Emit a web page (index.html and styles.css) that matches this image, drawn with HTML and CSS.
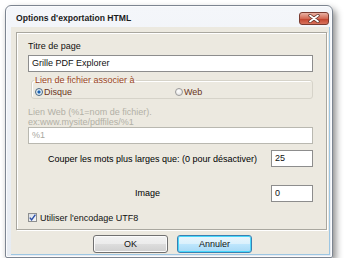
FILE: index.html
```html
<!DOCTYPE html>
<html lang="fr">

<head>
    <meta charset="UTF-8">
    <meta name="viewport" content="width=device-width, initial-scale=1.0">
    <title>Options d'exportation HTML</title>
    <link rel="stylesheet" href="styles.css">
</head>

<body>
    <div class="window">
        <div class="titlebar">
            <span class="title">Options d'exportation HTML</span>
            <span class="close">
                <svg width="14" height="9" viewBox="0 0 14 9">
                    <path d="M3 1.5 L11 7.5 M11 1.5 L3 7.5" stroke="#5a2a22" stroke-width="3.2" stroke-linecap="round"/>
                    <path d="M3 1.5 L11 7.5 M11 1.5 L3 7.5" stroke="#fff" stroke-width="1.8" stroke-linecap="round"/>
                </svg>
            </span>
        </div>
        <div class="client">
            <div class="panel">
                <div class="label first">Titre de page</div>
                <div class="textbox">Grille PDF Explorer</div>

                <fieldset class="group">
                    <legend>Lien de fichier associer à</legend>
                    <div class="radios">
                        <span class="option wide"><span class="radio checked"></span>Disque</span>
                        <span class="option"><span class="radio"></span>Web</span>
                    </div>
                </fieldset>

                <div class="hint">Lien Web (%1=nom de fichier).<br>ex:www.mysite/pdffiles/%1</div>
                <div class="textbox disabled">%1</div>

                <div class="row cut">
                    <span class="row-text">Couper les mots plus larges que: (0 pour désactiver)</span>
                    <span class="textbox small">25</span>
                </div>
                <div class="row image">
                    <span class="row-text">Image</span>
                    <span class="textbox small">0</span>
                </div>

                <div class="check-row">
                    <span class="checkbox">
                        <svg width="9" height="9" viewBox="0 0 9 9">
                            <path d="M1.8 4.6 L3.6 6.8 L7.4 1.6" fill="none" stroke="#2b4fa8" stroke-width="1.4"/>
                        </svg>
                    </span>
                    Utiliser l'encodage UTF8
                </div>
            </div>
            <div class="buttons">
                <button class="btn">OK</button>
                <button class="btn focus">Annuler</button>
            </div>
        </div>
    </div>
</body>

</html>
```

FILE: styles.css
```css
body {
    margin: 0;
    padding: 0;
    background-color: #fff;
    font-family: "Liberation Sans", Arial, sans-serif;
    font-size: 9px;
    color: #000;
}

.window {
    margin: 5px 0 0 5px;
    width: 328px;
    height: 253px;
    box-sizing: border-box;
    padding: 0 2px 2px 5px;
    border: 1px solid #7d8591;
    border-radius: 6px 6px 2px 2px;
    background: linear-gradient(#f4f6fa, #e6ebf2);
    box-shadow: 3px 4px 7px rgba(0, 0, 0, 0.45), inset 0 0 0 1px #fbfcfe;
}

.titlebar {
    height: 21px;
    display: flex;
    align-items: center;
    justify-content: space-between;
    padding: 0 1px 0 5px;
}

.title {
    font-weight: bold;
    font-size: 8.6px;
    color: #1b1b1b;
    margin-top: 3px;
}

.close {
    width: 30px;
    height: 13px;
    box-sizing: border-box;
    margin-top: 3px;
    border: 1px solid #7a3b30;
    border-radius: 3px;
    background: linear-gradient(#eab2a4, #d36a55 50%, #c0402b 51%, #d8735c);
    display: flex;
    align-items: center;
    justify-content: center;
}

.client {
    height: 228px;
    box-sizing: border-box;
    background-color: #ece9e0;
    border-right: 1px solid #9cc6e3;
    border-bottom: 1px solid #9cc6e3;
    padding: 5px 2px 0 5px;
}

.panel {
    height: 198px;
    box-sizing: border-box;
    border: 1px solid #a9a79f;
    box-shadow: inset 1px 1px 0 #fff, 1px 1px 0 #fff;
    padding: 0 13px 0 11px;
}

.label {
    line-height: 11px;
}

.label.first {
    margin-top: 8px;
    color: #111;
}

.textbox {
    height: 17px;
    box-sizing: border-box;
    border: 1px solid #8d8d8d;
    background-color: #fff;
    line-height: 15px;
    padding-left: 3px;
    margin-top: 3px;
    color: #111;
}

.textbox.disabled {
    margin-top: 0;
    color: #a9a8a0;
    border-color: #b9b8b0;
}

.group {
    margin: 3px 0 0 3px;
    padding: 0 0 0 2px;
    border: 1px solid #d6d3c9;
    border-radius: 3px;
    box-shadow: inset 1px 1px 0 #fff;
}

.group legend {
    padding: 0 1px;
    line-height: 11px;
    color: #9a4524;
}

.radios {
    height: 12px;
    display: flex;
    align-items: center;
}

.option {
    display: flex;
    align-items: center;
    color: #6a3520;
}

.option.wide {
    width: 140px;
}

.radio {
    width: 8px;
    height: 8px;
    box-sizing: border-box;
    border: 1px solid #9a9a9a;
    border-radius: 50%;
    background: radial-gradient(circle at 40% 35%, #fff, #dcdcdc);
    margin: 0 1px 0 1px;
}

.radio.checked {
    border-color: #4a6782;
    background: radial-gradient(circle, #0a3f8e 0, #2e7fcf 35%, #d8e6f0 40%, #f4f6f8 100%);
}

.hint {
    margin-top: 8px;
    line-height: 10px;
    color: #b2b0a6;
}

.row {
    display: flex;
    align-items: center;
}

.row .row-text {
    flex: 1;
}

.row .textbox.small {
    width: 42px;
    margin-top: 0;
}

.row.cut {
    margin-top: 6px;
}

.row.cut .row-text {
    padding-left: 20px;
}

.row.image {
    margin-top: 18px;
}

.row.image .row-text {
    padding-left: 107px;
    margin-top: -2px;
}

.check-row {
    margin-top: 10px;
    height: 11px;
    display: flex;
    align-items: center;
    color: #111;
}

.checkbox {
    width: 9px;
    height: 9px;
    box-sizing: border-box;
    border: 1px solid #8e8f8f;
    background: linear-gradient(135deg, #d8dde4, #f6f7f9);
    display: flex;
    align-items: center;
    justify-content: center;
    margin-right: 3px;
}

.checkbox svg {
    display: block;
    flex: none;
}

.buttons {
    display: flex;
    justify-content: center;
    gap: 9px;
    margin-top: 5px;
    padding-left: 2px;
}

.btn {
    width: 75px;
    height: 18px;
    padding: 0;
    font-family: "Liberation Sans", Arial, sans-serif;
    font-size: 9px;
    color: #111;
    border: 1px solid #707070;
    border-radius: 3px;
    background: linear-gradient(#f2f2f2, #ebebeb 50%, #dddddd 51%, #cfcfcf);
    box-shadow: inset 0 0 0 1px #fbfbfb;
}

.btn.focus {
    border-color: #3c7fb1;
    background: linear-gradient(#eaf6fd, #d9f0fc 50%, #bee6fd 51%, #a7d9f5);
    box-shadow: inset 0 0 0 1px #48d8fb;
}
```
